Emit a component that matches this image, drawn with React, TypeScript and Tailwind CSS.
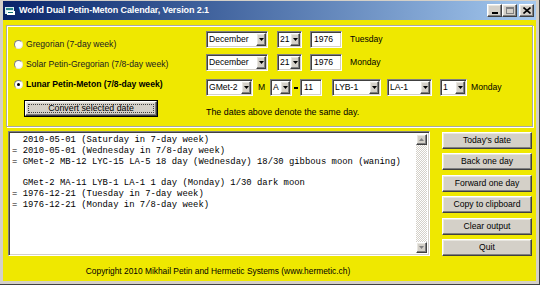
import React from 'react';

const ui = "font-['Liberation_Sans',Arial,sans-serif]";

const raised =
  'bg-[#d4d0c8] border border-t-white border-l-white border-r-[#404040] border-b-[#404040] shadow-[inset_-1px_-1px_0_#808080,inset_1px_1px_0_#e8e6e0]';

const sunken =
  'bg-white border border-t-[#808080] border-l-[#808080] border-r-white border-b-white shadow-[inset_1px_1px_0_#404040,inset_-1px_-1px_0_#d4d0c8]';

function DownArrow({ color = '#000' }: { color?: string }) {
  return (
    <svg width="5" height="3" viewBox="0 0 5 3">
      <path d="M0 0h5L2.5 3z" fill={color} />
    </svg>
  );
}

function UpArrow({ color = '#000' }: { color?: string }) {
  return (
    <svg width="5" height="3" viewBox="0 0 5 3">
      <path d="M0 3h5L2.5 0z" fill={color} />
    </svg>
  );
}

function Combo({ value, w }: { value: string; w: number }) {
  return (
    <div className={`${sunken} h-[17px] flex items-stretch p-[1px]`} style={{ width: w }}>
      <span className="flex-1 text-[8.6px] leading-[13px] pl-[1px] text-black whitespace-nowrap">{value}</span>
      <div className={`${raised} w-[10px] shrink-0 flex items-center justify-center`}>
        <DownArrow />
      </div>
    </div>
  );
}

function Field({ value, w }: { value: string; w: number }) {
  return (
    <div className={`${sunken} h-[17px] px-[3px] text-[8.6px] leading-[15px] text-black`} style={{ width: w }}>
      {value}
    </div>
  );
}

function Radio({ checked, label, bold }: { checked?: boolean; label: string; bold?: boolean }) {
  return (
    <div className="h-[20px] flex items-center gap-[3px]">
      <div className="w-[9px] h-[9px] rounded-full bg-white border border-t-[#808080] border-l-[#808080] border-r-[#e8e6e0] border-b-[#e8e6e0] flex items-center justify-center">
        {checked && <div className="w-[3px] h-[3px] rounded-full bg-black" />}
      </div>
      <span className={`text-[8.6px] ${bold ? 'font-bold text-black' : 'text-[#202020]'}`}>{label}</span>
    </div>
  );
}

function Btn({ label }: { label: string }) {
  return (
    <div className={`${raised} w-[90px] h-[17px] flex items-center justify-center text-[8.6px] text-black`}>
      {label}
    </div>
  );
}

const lines = [
  '  2010-05-01 (Saturday in 7-day week)',
  '= 2010-05-01 (Wednesday in 7/8-day week)',
  '= GMet-2 MB-12 LYC-15 LA-5 18 day (Wednesday) 18/30 gibbous moon (waning)',
  '',
  '  GMet-2 MA-11 LYB-1 LA-1 1 day (Monday) 1/30 dark moon',
  '= 1976-12-21 (Tuesday in 7-day week)',
  '= 1976-12-21 (Monday in 7/8-day week)',
];

export default function App() {
  return (
    <div className={`${ui} w-[540px] h-[285px] bg-[#d4d0c8] flex flex-col px-[3px] pt-[1px] pb-[3px] border-r border-b border-[#404040]`}>
      {/* Title bar */}
      <div className="h-[19px] flex items-center bg-gradient-to-r from-[#0a246a] to-[#a6caf0] pl-[2px] pr-[2px]">
        <svg width="11" height="10" viewBox="0 0 11 10" className="mr-[3px]">
          <rect x="0" y="1" width="9" height="7" fill="#d8f0f0" />
          <rect x="1" y="2" width="7" height="2" fill="#2a8a8a" />
          <rect x="2" y="5" width="8" height="4" fill="#ffffff" />
          <rect x="3" y="6" width="5" height="1" fill="#107070" />
        </svg>
        <span className="text-white font-bold text-[9px] tracking-[-0.1px]">World Dual Petin-Meton Calendar, Version 2.1</span>
        <div className="ml-auto flex items-center">
          <div className={`${raised} w-[15px] h-[13px] flex items-end justify-center pb-[2px]`}>
            <div className="w-[6px] h-[2px] bg-black" />
          </div>
          <div className={`${raised} w-[15px] h-[13px] flex items-center justify-center`}>
            <div className="w-[8px] h-[7px] border border-[#808080] border-t-2" />
          </div>
          <div className={`${raised} w-[15px] h-[13px] flex items-center justify-center ml-[2px]`}>
            <svg width="8" height="7" viewBox="0 0 8 7">
              <path d="M0.5 0.5l7 6M7.5 0.5l-7 6" stroke="#000" strokeWidth="1.6" />
            </svg>
          </div>
        </div>
      </div>

      {/* Client area */}
      <div className="flex-1 bg-[#efe800] flex flex-col">
        {/* Group box */}
        <div className="ml-[3px] mt-[5px] w-[527px] h-[102px] border border-[#a8a8a8] shadow-[inset_1px_1px_0_#ffffff,1px_1px_0_#ffffff] flex">
          <div className="w-[199px] pl-[7px] pt-[8px] flex flex-col">
            <Radio label="Gregorian (7-day week)" />
            <Radio label="Solar Petin-Gregorian (7/8-day week)" />
            <Radio checked bold label="Lunar Petin-Meton (7/8-day week)" />
            <div className="ml-[10px] mt-[6px] w-[134px] h-[17px] border border-black">
              <div className={`${raised} w-full h-full p-[2px]`}>
                <div className="w-full h-full border border-dotted border-[#404040] flex items-center justify-center text-[8.8px] text-black">
                  Convert selected date
                </div>
              </div>
            </div>
          </div>

          <div className="flex flex-col text-[8.6px] text-black">
            <div className="mt-[5px] flex items-center h-[17px]">
              <Combo value="December" w={62} />
              <div className="ml-[9px]"><Combo value="21" w={25} /></div>
              <div className="ml-[8px]"><Field value="1976" w={32} /></div>
              <span className="ml-[8px]">Tuesday</span>
            </div>
            <div className="mt-[6px] flex items-center h-[17px]">
              <Combo value="December" w={62} />
              <div className="ml-[9px]"><Combo value="21" w={25} /></div>
              <div className="ml-[8px]"><Field value="1976" w={32} /></div>
              <span className="ml-[8px]">Monday</span>
            </div>
            <div className="mt-[8px] flex items-center h-[17px]">
              <Combo value="GMet-2" w={47} />
              <span className="ml-[5px] w-[12px]">M</span>
              <Combo value="A" w={22} />
              <span className="w-[8px] flex justify-center"><span className="w-[4px] h-[2px] bg-black" /></span>
              <Field value="11" w={22} />
              <div className="ml-[10px]"><Combo value="LYB-1" w={49} /></div>
              <div className="ml-[6px]"><Combo value="LA-1" w={45} /></div>
              <div className="ml-[8px]"><Combo value="1" w={27} /></div>
              <span className="ml-[4px]">Monday</span>
            </div>
            <div className="mt-[10px] leading-[12px] text-[8.9px]">The dates above denote the same day.</div>
          </div>
        </div>

        {/* Lower area */}
        <div className="mt-[4px] flex">
          <div className={`${sunken} ml-[5px] w-[422px] h-[125px] p-[2px] flex`}>
            <div className="flex-1 pl-[1px] pt-[1px] font-['Liberation_Mono','Courier_New',monospace] text-[8.9px] leading-[10.8px] text-black whitespace-pre">
              {lines.map((l, i) => (
                <div key={i} className="h-[10.8px]">{l}</div>
              ))}
            </div>
            <div className="w-[11px] flex flex-col bg-[repeating-conic-gradient(#d4d0c8_0%_25%,#ffffff_0%_50%)] bg-[length:2px_2px]">
              <div className={`${raised} h-[11px] flex items-center justify-center`}>
                <UpArrow color="#808080" />
              </div>
              <div className="flex-1" />
              <div className={`${raised} h-[11px] flex items-center justify-center`}>
                <DownArrow color="#808080" />
              </div>
            </div>
          </div>
          <div className="ml-[12px] pt-[1px] flex flex-col gap-[4.4px]">
            <Btn label="Today's date" />
            <Btn label="Back one day" />
            <Btn label="Forward one day" />
            <Btn label="Copy to clipboard" />
            <Btn label="Clear output" />
            <Btn label="Quit" />
          </div>
        </div>

        <div className="mt-[9px] w-[430px] text-center text-[8.4px] text-black leading-[12px]">
          Copyright 2010 Mikhail Petin and Hermetic Systems (www.hermetic.ch)
        </div>
      </div>
    </div>
  );
}
